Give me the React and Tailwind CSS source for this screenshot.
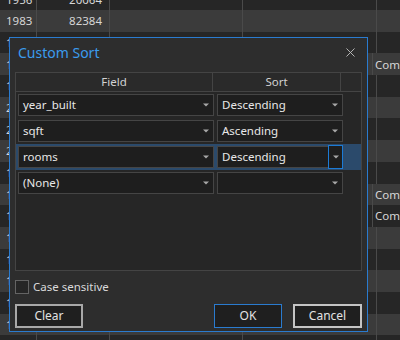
import { X } from 'lucide-react';

const years = ['1956', '1983', '1975', '1968', '1981', '2004', '2011', '2007', '1992', '1987', '1961', '1979', '1999', '1955', '1972', '1988', '1964'];
const sqft = ['20064', '82384', '', '', '', '', '', '', '', '', '', '', '', '', '', '', ''];
const comRows = [3, 9, 10];

const sortRows = [
  { field: 'year_built', sort: 'Descending' },
  { field: 'sqft', sort: 'Ascending' },
  { field: 'rooms', sort: 'Descending', selected: true },
  { field: '(None)', sort: '' },
];

function Arrow() {
  return (
    <svg width="6" height="4" viewBox="0 0 6 4" className="shrink-0">
      <path d="M0 0.5 L6 0.5 L3 3.5 Z" fill="#a8a8a8" />
    </svg>
  );
}

function Combo({ value, width, focused }) {
  return (
    <div className={`h-[22px] ${width} flex items-center bg-[#1e1e1e] border border-[#454545] text-[11.5px] text-[#e8e8e8]`}>
      <span className="flex-1 pl-[4px] truncate">{value}</span>
      {focused ? (
        <div className="w-[15px] h-[24px] -mr-px flex items-center justify-center border border-[#1c7bd6] bg-[#1e1e1e]">
          <Arrow />
        </div>
      ) : (
        <div className="w-[15px] flex items-center justify-center">
          <Arrow />
        </div>
      )}
    </div>
  );
}

export default function App() {
  return (
    <div className="relative w-[400px] h-[340px] overflow-hidden bg-[#242424] font-['Noto_Sans',sans-serif]">
      {/* table behind the dialog */}
      <div className="flex flex-col mt-[-11.7px]">
        {years.map((y, k) => (
          <div
            key={k}
            className={`h-[21.7px] flex shrink-0 text-[11.5px] text-[#d6d6d6] ${k % 2 ? 'bg-[#3b3b3b]' : 'bg-[#262626]'}`}
          >
            <div className="w-[37px] border-r border-[#4a4a4a] flex items-center pl-[6px]">{k < 2 ? y : y.slice(0, 1)}</div>
            <div className="w-[73px] border-r border-[#4a4a4a] flex items-center justify-end pr-[7px]">{sqft[k]}</div>
            <div className="w-[133px] border-r border-[#4a4a4a]" />
            <div className="w-[134px] border-r border-[#4a4a4a]" />
            <div className="flex-1 flex items-center pl-[2px]">{comRows.includes(k) ? 'Com' : ''}</div>
          </div>
        ))}
      </div>

      {/* Custom Sort dialog */}
      <div className="absolute left-[9px] top-[37px] w-[359px] h-[295px] border border-[#2a7bcf] bg-[#2d2d2d] flex flex-col">
        <div className="h-[28px] flex items-center justify-between pl-[8px] pr-[9px]">
          <span className="text-[14px] text-[#3b9cee]">Custom Sort</span>
          <X size={15} strokeWidth={1.5} color="#bdbdbd" />
        </div>

        <div className="mt-[6px] ml-[5px] w-[347px] h-[199px] border border-[#444444] bg-[#262626] flex flex-col">
          <div className="h-[19px] flex bg-[#2a2a2a] border-b border-[#444444] text-[11.5px] text-[#d2d2d2]">
            <div className="w-[197px] border-r border-[#444444] flex items-center justify-center">Field</div>
            <div className="w-[128px] border-r border-[#444444] flex items-center justify-center">Sort</div>
            <div className="flex-1" />
          </div>
          {sortRows.map((r, i) => (
            <div
              key={i}
              className={`h-[26px] flex items-center ${r.selected ? 'bg-[#2b4a6b]' : ''}`}
            >
              <div className="ml-[2px]">
                <Combo value={r.field} width="w-[196px]" />
              </div>
              <div className="ml-[3px]">
                <Combo value={r.sort} width="w-[126px]" focused={r.selected} />
              </div>
            </div>
          ))}
        </div>

        <div className="mt-[7px] ml-[5px] flex items-center gap-[4px]">
          <div className="w-[14px] h-[14px] border border-[#646464] bg-[#262626]" />
          <span className="text-[11.5px] text-[#dadada]">Case sensitive</span>
        </div>

        <div className="mt-[9px] mx-[5px] flex items-center text-[12px] text-[#e2e2e2]">
          <button className="w-[68px] h-[24px] border-2 border-[#a8a8a8] bg-[#1f1f1f]">Clear</button>
          <div className="flex-1" />
          <button className="w-[68px] h-[24px] border border-[#2a7bcf] bg-[#1f1f1f]">OK</button>
          <button className="ml-[11px] w-[69px] h-[24px] border-2 border-[#c4c4c4] bg-[#1f1f1f]">Cancel</button>
        </div>
      </div>
    </div>
  );
}
